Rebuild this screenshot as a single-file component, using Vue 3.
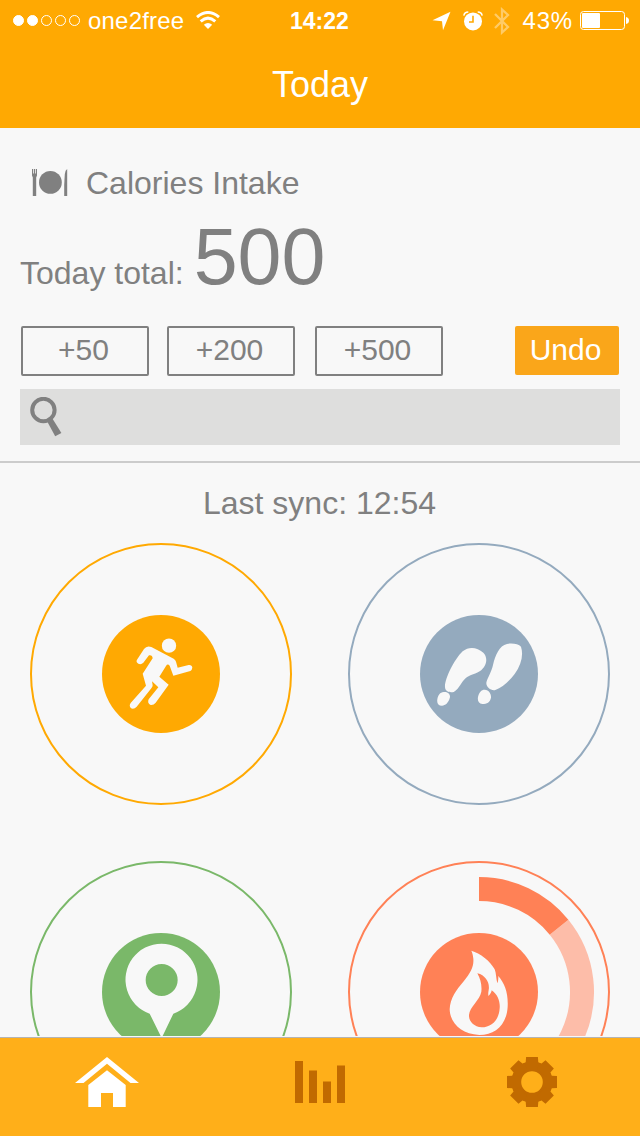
<template>
  <div class="screen">
    <header class="topbar">
      <div class="status">
        <div class="status-left">
          <span v-for="n in 5" :key="n" class="dot" :class="{ filled: n <= signal }"></span>
          <span class="carrier">one2free</span>
          <svg class="wifi" width="24" height="19" viewBox="0 0 24 19" fill="none" stroke="#fff" stroke-width="3">
            <path d="M1 6.1 Q12 -3.1 23 6.1" />
            <path d="M4.7 10.3 Q12 4 19.3 10.3" />
            <path d="M12 18 L7.8 13.7 Q12 10.4 16.2 13.7 Z" fill="#fff" stroke="none" />
          </svg>
        </div>
        <span class="clock">14:22</span>
        <div class="status-right">
          <svg width="19" height="20" viewBox="0 0 19 20" fill="#fff">
            <path d="M18.5 .8 L11 19.2 L10 10.2 L.5 9.2 Z" />
          </svg>
          <svg class="alarm" width="20" height="20" viewBox="0 0 20 20" fill="none" stroke="#fff">
            <circle cx="10" cy="10.4" r="9" fill="#fff" stroke="none" />
            <path d="M.8 4.6 Q1.5 1.2 5.3 1.1 M19.2 4.6 Q18.5 1.2 14.7 1.1" stroke-width="1.5" />
            <path d="M10 4.7 V11 H6" stroke="#ffa902" stroke-width="1.6" />
          </svg>
          <svg class="bluetooth" width="16" height="28" viewBox="0 0 16 28" fill="none" stroke="#fff" stroke-width="2.3">
            <path d="M1 7 L14 20 L8 25.5 V2.5 L14 8 L1 21" />
          </svg>
          <span class="percent">43%</span>
          <svg width="49" height="19" viewBox="0 0 49 19" fill="#fff">
            <rect x=".5" y=".5" width="44" height="18" rx="3" fill="none" stroke="#fff" />
            <rect x="2" y="2" width="18" height="15" rx="1" />
            <path d="M46 6 Q49 6.5 49 9.5 Q49 12.5 46 13 Z" />
          </svg>
        </div>
      </div>
      <h1 class="title">Today</h1>
    </header>

    <section class="intake">
      <div class="intake-head">
        <svg width="37" height="28" viewBox="0 0 37 28" fill="#808080">
          <path d="M0 0h1.2v4.5h.8V0h1v4.5h.8V0H5v6.5L4.2 8.5V27H.8V8.5L0 6.5z" />
          <circle cx="18.4" cy="13.4" r="11.4" />
          <path d="M35.2 0V27H32.2V16L32.8 5Q33.3 1 35.2 0Z" />
        </svg>
        <span>Calories Intake</span>
      </div>
      <div class="total">
        <span>Today total:</span>
        <span class="amount">{{ total }}</span>
      </div>
      <div class="actions">
        <button v-for="step in steps" :key="step" class="add" type="button" @click="add(step)">+{{ step }}</button>
        <button class="undo" type="button" @click="undo">Undo</button>
      </div>
      <div class="search">
        <svg width="34" height="40" viewBox="0 0 34 40">
          <circle cx="13.4" cy="13" r="11.2" fill="none" stroke="#808080" stroke-width="4" />
          <path d="M17.2 24.4 L22.4 21.6 L31.4 36 L25.2 39.2Z" fill="#808080" />
        </svg>
      </div>
    </section>

    <main class="sync">
      <p class="sync-time">Last sync: 12:54</p>
      <div class="rings">
        <svg v-for="ring in rings" :key="ring.name" width="262" height="262" viewBox="-131 -131 262 262">
          <circle r="130" fill="none" :stroke="ring.color" stroke-width="2" />
          <template v-if="ring.name === 'burned'">
            <path d="M80.05 -64.82 A103 103 0 0 1 0 103" fill="none" stroke="#fdbda9" stroke-width="24" />
            <path d="M0 -103 A103 103 0 0 1 80.05 -64.82" fill="none" :stroke="ring.color" stroke-width="24" />
          </template>
          <circle r="59" :fill="ring.color" />
          <g :transform="ring.transform" fill="#f8f8f8">
            <circle v-if="ring.name === 'active'" cx="222" cy="122" r="21.5" />
            <path :d="ring.icon" fill-rule="evenodd" />
          </g>
        </svg>
      </div>
    </main>

    <nav class="tabbar">
      <a class="tab">
        <svg width="64" height="50" viewBox="0 0 64 50" fill="#fff">
          <path d="M32 0 L64 26 H55.5 L32 6.7 L8.5 26 H0 Z" />
          <path d="M32 13.3 L50.7 28 V50 H38 V36 H26 V50 H13.3 V28 Z" />
        </svg>
      </a>
      <a class="tab">
        <svg width="50" height="50" viewBox="0 0 50 50" fill="#c16a00">
          <path d="M0 4h8v42H0z M14 13.6h8V46h-8z M28 24.5h8V46h-8z M42 8.5h8V46h-8z" />
        </svg>
      </a>
      <a class="tab gear">
        <svg width="50" height="50" viewBox="-25 -25 50 50" fill="#c16a00">
          <circle r="15" fill="none" stroke="#c16a00" stroke-width="8.4" />
          <path
            v-for="angle in teeth"
            :key="angle"
            d="M-5.9 -25 H5.9 L6.3 -19.8 L9 -18.4 L5 -13 H-5 L-9 -18.4 L-6.3 -19.8 Z"
            :transform="`rotate(${angle})`"
          />
        </svg>
      </a>
    </nav>
  </div>
</template>

<script setup>
import { ref } from 'vue'

const signal = 2
const total = ref(500)
const steps = [50, 200, 500]
const history = []
const teeth = [0, 45, 90, 135, 180, 225, 270, 315]

const add = step => {
  history.push(step)
  total.value += step
}

const undo = () => {
  if (!history.length) return
  total.value -= history.pop()
}

// icon glyphs are drawn at 3x and moved to the ring centre
const rings = [
  {
    name: 'active',
    color: '#ffa902',
    transform: 'scale(.3333) translate(-198 -207)',
    icon: 'M126 164 L147 132 Q155 121 169 126 L236 161 Q242 165 243 170 L248 188 L281 180 Q291 179 292 188 Q291 195 286 198 L235 212 L224 182 Q218 175 213 183 L193 215 L221 239 L182 293 Q176 301 167 300 Q156 295 161 283 L190 247 L171 229 L173 241 Q173 246 169 250 L125 305 Q117 314 108 310 Q101 303 107 294 L153 242 L143 206 L173 160 Q172 149 162 151 L145 173 Q138 180 130 176 Q122 171 126 164Z',
  },
  {
    name: 'steps',
    color: '#94aabe',
    transform: 'scale(.3333) translate(-201 -207)',
    icon: 'M99 247 C97 225 125 165 152 139 C170 124 195 126 214 143 C228 157 226 183 203 199 C185 210 168 210 155 226 C145 238 138 255 125 261 C112 264 100 259 99 247Z M95 261 C108 260 117 268 113 280 C109 294 100 302 90 302 C79 302 74 295 76 283 C78 270 84 262 95 261Z M223 233 C225 222 239 200 243 180 C250 150 262 122 285 117 C300 114 320 117 327 125 C335 150 328 180 308 207 C290 230 270 248 250 255 C238 258 222 248 223 233Z M218 254 C232 255 238 268 237 278 C234 292 225 297 211 297 C200 296 196 288 198 276 C201 262 208 254 218 254Z',
  },
  {
    name: 'distance',
    color: '#7ab869',
    transform: 'scale(.3333) translate(-213 -216)',
    icon: 'M179 281 A108 108 0 1 1 250 281 L215 354 Z M215 132 A48 48 0 1 0 215 228 A48 48 0 1 0 215 132Z',
  },
  {
    name: 'burned',
    color: '#ff8156',
    transform: 'scale(.3333) translate(-237 -426)',
    icon: 'M214 302 C240 309 272 334 284 358 C289 370 288 385 292 400 C295 392 295 385 295 378 C315 402 325 430 323 470 C320 525 285 555 238 555 C185 552 150 520 149 478 C150 445 170 418 190 395 C212 368 222 350 220 326 C219 316 217 308 214 302Z M232 370 C258 376 270 400 266 420 C264 430 265 435 265 438 C272 432 274 427 275 421 C293 433 301 455 299 475 C297 510 275 532 245 532 C222 530 206 515 207 495 C209 470 240 450 244 425 C246 405 242 388 232 370Z',
  },
]
</script>

<style>
body {
  background: #f8f8f8;
}
</style>

<style scoped>
.screen {
  width: 640px;
  height: 1136px;
  display: flex;
  flex-direction: column;
  overflow: hidden;
  background: #f8f8f8;
  color: #808080;
  font-family: "Liberation Sans", Arial, sans-serif;
  font-size: 32px;
}

svg {
  display: block;
  flex: none;
}

.topbar {
  flex: none;
  height: 128px;
  background: #ffa902;
  color: #fff;
}

.status {
  height: 41px;
  padding: 0 11px 0 13px;
  display: grid;
  grid-template-columns: 1fr 62px 1fr;
  align-items: center;
  font-size: 24px;
  line-height: 41px;
}

.status-left,
.status-right {
  display: flex;
  align-items: center;
}

.status-right {
  justify-content: flex-end;
}

.dot {
  width: 11px;
  height: 11px;
  box-sizing: border-box;
  border: 1px solid #fff;
  border-radius: 50%;
  margin-right: 3px;
}

.dot.filled {
  background: #fff;
}

.carrier {
  margin-left: 5px;
  letter-spacing: 0.2px;
}

.wifi {
  margin-left: 12px;
}

.clock {
  padding: 1px 4px 0 0;
  font-size: 23px;
  font-weight: bold;
  line-height: 40px;
  text-align: center;
}

.alarm {
  margin-left: 12px;
}

.bluetooth {
  margin-left: 11px;
  opacity: 0.4;
}

.percent {
  margin: 0 7px 0 13px;
  letter-spacing: 0.8px;
}

.title {
  margin: 0;
  font-size: 36px;
  font-weight: normal;
  line-height: 87px;
  text-align: center;
}

.intake {
  flex: none;
  height: 335px;
  box-sizing: border-box;
  padding: 35px 20px 0;
  border-bottom: 2px solid #ccc;
}

.intake-head {
  display: flex;
  align-items: center;
  gap: 17px;
  height: 40px;
  padding-left: 12px;
}

.total {
  display: flex;
  align-items: baseline;
  gap: 10px;
  height: 123px;
  line-height: 108px;
}

.amount {
  font-size: 79px;
}

.actions {
  display: flex;
  padding: 0 1px;
  height: 50px;
}

.actions button {
  box-sizing: border-box;
  font-family: inherit;
  font-size: 30px;
  line-height: 44px;
  border-radius: 2px;
}

.add {
  width: 128px;
  margin-right: 18px;
  padding: 0 3px 2px 0;
  border: 2px solid #808080;
  background: none;
  color: #808080;
}

.add:nth-child(2) {
  margin-right: 20px;
}

.undo {
  width: 104px;
  height: 49px;
  margin-left: auto;
  padding: 0 3px 2px 0;
  border: 0;
  background: #faa61a;
  color: #fff;
}

.search {
  height: 56px;
  box-sizing: border-box;
  margin-top: 13px;
  padding: 8px 10px;
  background: #dededd;
}

.sync {
  flex: none;
  height: 573px;
  overflow: hidden;
}

.sync-time {
  margin: 20px 0;
  padding-right: 1px;
  line-height: 40px;
  text-align: center;
}

.rings {
  display: grid;
  grid-template-columns: 262px 262px;
  gap: 56px;
  padding-left: 30px;
}

.tabbar {
  flex: none;
  height: 98px;
  box-sizing: border-box;
  margin-top: 2px;
  padding-top: 19px;
  box-shadow: 0 -1px 0 #b4b4b4;
  background: #ffaf19;
  display: grid;
  grid-template-columns: repeat(3, 1fr);
  justify-items: center;
}

.gear {
  margin-right: 2px;
}
</style>
